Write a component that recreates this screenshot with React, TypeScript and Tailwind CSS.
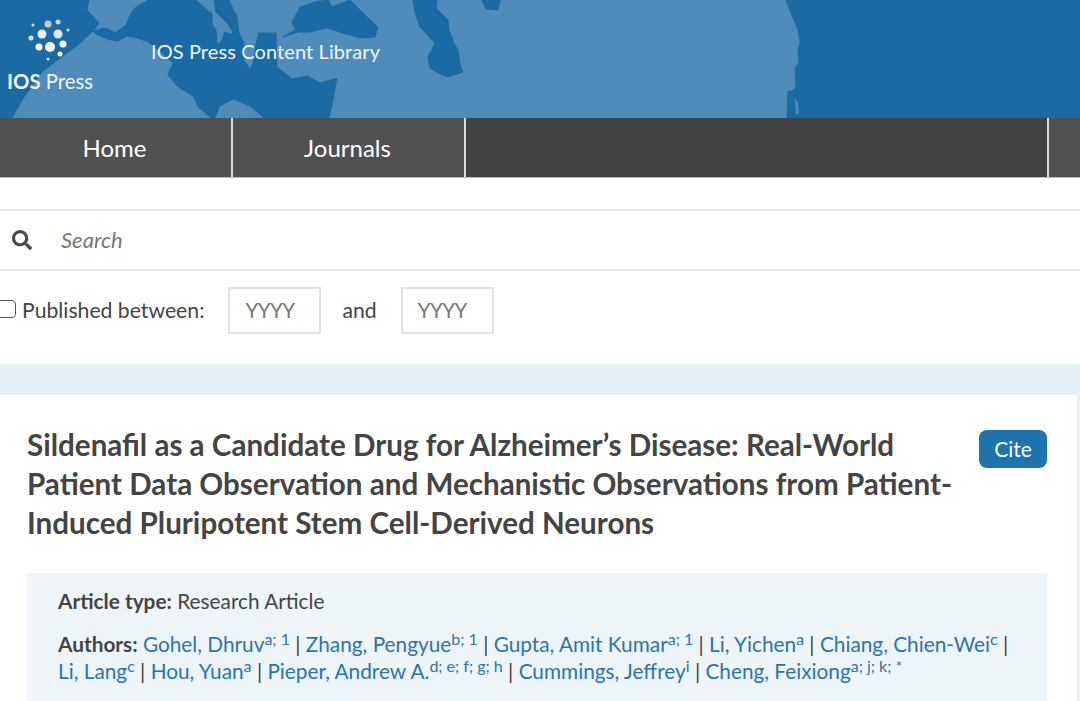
import { FaSearch } from "react-icons/fa";

const font = "font-['Lato','Noto_Sans',sans-serif]";

const authors1 = [
  { name: "Gohel, Dhruv", sup: "a; 1" },
  { name: "Zhang, Pengyue", sup: "b; 1" },
  { name: "Gupta, Amit Kumar", sup: "a; 1" },
  { name: "Li, Yichen", sup: "a" },
  { name: "Chiang, Chien-Wei", sup: "c" },
];
const authors2 = [
  { name: "Li, Lang", sup: "c" },
  { name: "Hou, Yuan", sup: "a" },
  { name: "Pieper, Andrew A.", sup: "d; e; f; g; h" },
  { name: "Cummings, Jeffrey", sup: "i" },
  { name: "Cheng, Feixiong", sup: "a; j; k; *" },
];

const MapBackground = () => (
  <svg className="absolute inset-0" width="1080" height="118" viewBox="0 0 1080 118">
    <g fill="#4f8cb9" stroke="#4f8cb9" strokeWidth="1" strokeLinejoin="round">
      {/* iberia */}
      <path d="M90 0 L147 0 L136 6 L130 13 L125 25 L115 32 L108 28 L103 27 L95 30 L100 23 L94 16 L88 10 Z" />
      {/* africa */}
      <path d="M13 118 L25 97 L43 72 L63 57 L78 46 L93 32 L96 35 L107 40 L118 42 L127 37 L137 39 L147 42 L160 52 L172 63 L167 75 L177 87 L193 97 L197 107 L210 118 Z" />
      <path d="M216 118 L220 107 L233 100 L250 107 L263 118 Z" />
      {/* italy */}
      <path d="M197 0 L213 0 L215 12 L228 25 L232 33 L224 31 L221 40 L218 43 L217 30 L213 24 L213 14 Z" />
      {/* europe and asia */}
      <path d="M230 0 L785 0 L790 13 L797 30 L799 43 L797 50 L798 62 L794 68 L795 87 L792 90 L787 91 L786 118 L330 118 L334 100 L338 77 L320 82 L307 75 L292 78 L278 67 L277 32 L258 32 L257 37 L255 43 L253 60 L250 68 L245 60 L245 43 L240 33 L238 17 Z" />
    </g>
    <g fill="#1c6aa3" stroke="#1c6aa3" strokeWidth="1" strokeLinejoin="round">
      {/* black sea */}
      <path d="M292 22 L300 7 L315 2 L328 0 L332 7 L342 3 L350 0 L363 13 L378 27 L375 37 L360 38 L343 33 L327 28 L310 32 L298 32 L283 37 L295 30 Z" />
      {/* caspian */}
      <path d="M413 0 L437 0 L436 8 L448 20 L449 30 L454 43 L458 50 L460 65 L463 72 L448 77 L436 72 L430 68 L428 57 L435 43 L420 27 L415 13 Z" />
      <path d="M482 0 L500 0 L498 10 L486 9 Z" />
    </g>
    <path fill="#4f8cb9" d="M795 98 L798 103 L799 113 L796 115 Z" />
    <g fill="#ffffff">
      <circle cx="33" cy="25" r="1.5" opacity="0.85" />
      <circle cx="48" cy="24" r="3.5" opacity="0.7" />
      <circle cx="58" cy="22" r="2.5" opacity="0.75" />
      <circle cx="68" cy="30" r="1.5" opacity="0.8" />
      <circle cx="42" cy="34" r="4.5" opacity="0.9" />
      <circle cx="58" cy="34" r="4.5" opacity="0.85" />
      <circle cx="31" cy="38" r="2.5" opacity="0.85" />
      <circle cx="39" cy="47" r="3.5" />
      <circle cx="50" cy="47" r="5" />
      <circle cx="63" cy="44" r="3.5" />
      <circle cx="60" cy="54" r="2.5" />
      <circle cx="48" cy="59" r="1.5" opacity="0.85" />
    </g>
  </svg>
);

const Author = ({ name, sup }: { name: string; sup: string }) => (
  <span>
    <span className="text-[#2a75ad]">{name}</span>
    <sup className="text-[#2a75ad] text-[16px] top-[-7px]">{sup}</sup>
  </span>
);

const AuthorLine = ({ list }: { list: typeof authors1 }) => (
  <>
    {list.map((a, i) => (
      <span key={a.name}>
        <Author name={a.name} sup={a.sup} />
        {i < list.length - 1 ? " | " : ""}
      </span>
    ))}
  </>
);

export default function App() {
  return (
    <div className={`h-[701px] w-[1080px] overflow-hidden bg-white text-[#444] ${font}`}>
      <header className="relative h-[118px] bg-[#1c6aa3] overflow-hidden">
        <MapBackground />
        <div className="relative flex h-full items-start">
          <div className="ml-[7px] mt-[69px] text-[20.3px] leading-[24px] text-[#f0f5f9]">
            <span className="font-bold">IOS</span> Press
          </div>
          <div className="ml-[58px] mt-[39px] text-[20px] tracking-[0.1px] leading-[24px] text-[#f0f5f9]">IOS Press Content Library</div>
        </div>
      </header>

      <nav className="flex h-[60px] border-b border-[#bbb] bg-[#424242] text-white text-[24px]">
        <a className="flex w-[233px] items-center justify-center border-r-2 border-[#ddd] bg-[#505050] pr-[2px]">Home</a>
        <a className="flex w-[233px] items-center justify-center border-r-2 border-[#ddd] bg-[#505050] pr-[2px]">Journals</a>
        <div className="w-[583px] border-r-2 border-[#ddd]" />
        <div className="flex-1 bg-[#505050]" />
      </nav>

      <div className="mt-[31px] flex h-[62px] items-center border-y-2 border-[#e2e2e2]">
        <FaSearch className="ml-[12px] text-[#4a4a4a]" size={20} />
        <span className="ml-[29px] mb-[2px] text-[22px] italic text-[#777]">Search</span>
      </div>

      <div className="flex h-[93px] items-start pt-[16px]">
        <div className="ml-[-8px] mt-[13px] h-[18px] w-[24px] rounded-[4px] border border-[#555]" />
        <span className="ml-[6px] mt-[9px] text-[21.2px] leading-[28px]">Published between:</span>
        <div className="ml-[24px] flex h-[47px] w-[93px] items-center border-2 border-[#e2e2e2] pl-[15px] text-[20.5px] tracking-[-0.5px] text-[#777]">YYYY</div>
        <span className="ml-[21px] mt-[9px] text-[21.2px] leading-[28px]">and</span>
        <div className="ml-[24px] flex h-[47px] w-[93px] items-center border-2 border-[#e2e2e2] pl-[15px] text-[20.5px] tracking-[-0.5px] text-[#777]">YYYY</div>
      </div>

      <div className="h-[338px] bg-[#e6f1f7] pt-[31px] pr-[3px]">
        <div className="h-full bg-white pl-[27px] pr-[30px] pt-[30px]">
          <div className="flex items-start justify-between">
            <h1 className="w-[930px] text-[29.6px] font-bold leading-[39px] text-[#444]">
              Sildenafil as a Candidate Drug for Alzheimer’s Disease: Real-World Patient Data Observation and Mechanistic Observations from Patient-Induced Pluripotent Stem Cell-Derived Neurons
            </h1>
            <button className="mt-[5px] h-[38px] w-[68px] rounded-[8px] bg-[#1f74b0] text-[21px] text-white">Cite</button>
          </div>
          <div className="mt-[31px] h-[128px] bg-[#eef5f9] pl-[31px] pt-[13px] text-[20.8px]">
            <div className="leading-[30px]">
              <b>Article type:</b> Research Article
            </div>
            <div className="mt-[14px] leading-[27px]">
              <div className="whitespace-nowrap">
                <b>Authors:</b> <AuthorLine list={authors1} /> |
              </div>
              <div className="whitespace-nowrap">
                <AuthorLine list={authors2} />
              </div>
            </div>
          </div>
        </div>
      </div>
    </div>
  );
}
